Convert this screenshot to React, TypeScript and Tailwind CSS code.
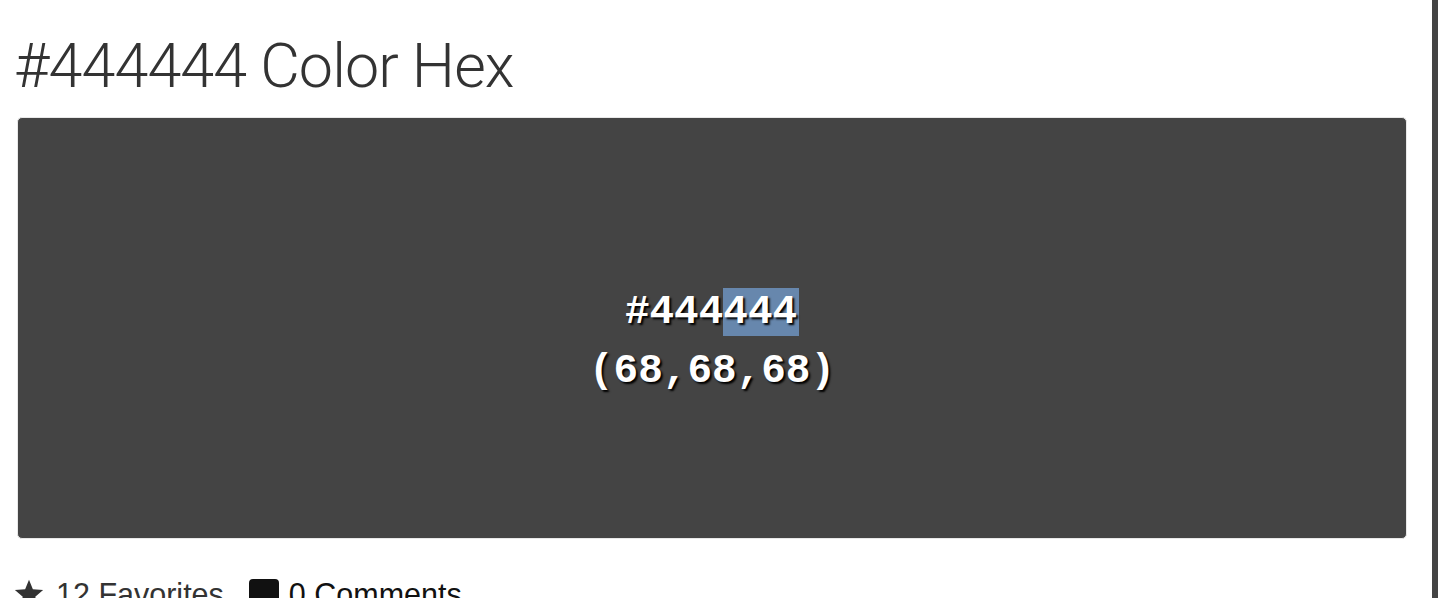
import React from "react";

function Star() {
  return (
    <svg width="30" height="29" viewBox="0 0 24 23" className="shrink-0">
      <path d="M12 0.5l3.1 7.6 8.2 0.6-6.3 5.3 2 8-7-4.4-7 4.4 2-8L0.7 8.7l8.2-0.6z" fill="#333" />
    </svg>
  );
}

function Comment() {
  return (
    <svg width="30" height="34" viewBox="0 0 30 34" className="shrink-0">
      <path d="M4 0h22a4 4 0 0 1 4 4v20a4 4 0 0 1-4 4H14l-8 6v-6H4a4 4 0 0 1-4-4V4a4 4 0 0 1 4-4z" fill="#111" />
    </svg>
  );
}

export default function App() {
  return (
    <div className="flex w-[1438px] h-[598px] overflow-hidden bg-white">
      <div className="flex-1 pl-[17px] pr-[25px]">
        <h1
          className="pt-[35px] h-[117px] text-[61px] leading-[62px] font-light text-[#333] ml-[-3px] tracking-[-0.9px]"
          style={{ fontFamily: "Roboto, 'Helvetica Neue', Arial, sans-serif" }}
        >
          #444444 Color Hex
        </h1>
        <div className="h-[422px] rounded-[5px] border border-[#e8e8e8] bg-[#444444] pt-[170px] flex flex-col items-center">
          <div
            className="h-[48px] leading-[48px] text-[41px] font-bold text-white [text-shadow:2px_2px_2px_#000]"
            style={{ fontFamily: "'Liberation Mono', 'Courier New', monospace" }}
          >
            #444<span className="bg-[#6787ad] inline-block h-[48px] pr-[2px]">444</span>
          </div>
          <div
            className="mt-[11px] h-[48px] leading-[48px] text-[41px] font-bold text-white [text-shadow:2px_2px_2px_#000]"
            style={{ fontFamily: "'Liberation Mono', 'Courier New', monospace" }}
          >
            (68,68,68)
          </div>
        </div>
        <div
          className="mt-[40px] flex items-start text-[30.5px] leading-[34px]"
          style={{ fontFamily: "'Liberation Sans', Arial, sans-serif" }}
        >
          <div className="ml-[-3px] flex items-start gap-[12px] text-[#333]">
            <Star />
            <span className="mt-[-2px]">12 Favorites</span>
          </div>
          <div className="ml-[25px] flex items-start gap-[10px] text-[#111]">
            <Comment />
            <span className="mt-[-2px]">0 Comments</span>
          </div>
        </div>
      </div>
      <div className="w-[6px] bg-[#444444]" />
    </div>
  );
}
